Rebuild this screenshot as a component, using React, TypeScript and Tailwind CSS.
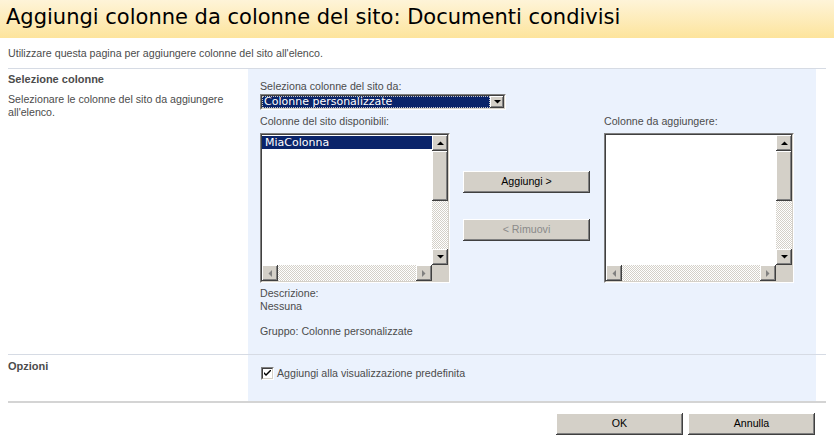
import React from 'react';

const raised =
  'bg-[#d4d0c8] shadow-[inset_-1px_-1px_#404040,inset_1px_1px_#ffffff,inset_-2px_-2px_#808080,inset_2px_2px_#d4d0c8]';
const hatch =
  'bg-[image:repeating-conic-gradient(#d4d0c8_0_25%,#ffffff_0_50%)] bg-[length:2px_2px]';
const sunkenOuter =
  'border-t border-l border-t-[#808080] border-l-[#808080] border-r border-b border-r-white border-b-white';
const sunkenInner =
  'border-t border-l border-t-[#404040] border-l-[#404040] border-r border-b border-r-[#d4d0c8] border-b-[#d4d0c8]';

function Arrow({ dir, disabled }: { dir: 'up' | 'down' | 'left' | 'right'; disabled?: boolean }) {
  const fill = disabled ? '#808080' : '#000000';
  const pts = {
    up: '0,4 7,4 3.5,0.5',
    down: '0,0 7,0 3.5,3.5',
    left: '4,0 4,7 0.5,3.5',
    right: '0,0 0,7 3.5,3.5',
  }[dir];
  const vertical = dir === 'up' || dir === 'down';
  return (
    <div className={`${raised} flex h-4 w-4 shrink-0 items-center justify-center`}>
      <svg width={vertical ? 7 : 4} height={vertical ? 4 : 7} viewBox={vertical ? '0 0 7 4' : '0 0 4 7'}>
        <polygon points={pts} fill={fill} />
      </svg>
    </div>
  );
}

function Listbox({ items, selected }: { items: string[]; selected?: number }) {
  return (
    <div className={`h-[150px] w-[190px] ${sunkenOuter}`}>
      <div className={`flex h-full w-full flex-col bg-white ${sunkenInner}`}>
        <div className="flex flex-1">
          <div className="flex-1 pt-[1px]">
            {items.map((it, i) => (
              <div
                key={it}
                className={`h-[13px] pl-[3px] font-['DejaVu_Sans'] text-[11px] leading-[13px] ${
                  i === selected ? 'bg-[#0a246a] text-white' : 'text-black'
                }`}
              >
                {it}
              </div>
            ))}
          </div>
          <div className="flex w-4 flex-col">
            <Arrow dir="up" />
            <div className={`${raised} h-[50px]`} />
            <div className={`flex-1 ${hatch}`} />
            <Arrow dir="down" />
          </div>
        </div>
        <div className="flex h-4">
          <Arrow dir="left" disabled />
          <div className={`flex-1 ${hatch}`} />
          <Arrow dir="right" disabled />
          <div className="w-4 bg-[#d4d0c8]" />
        </div>
      </div>
    </div>
  );
}

function WinButton({ label, disabled, className = '' }: { label: string; disabled?: boolean; className?: string }) {
  return (
    <div
      className={`${raised} flex h-[22px] w-[127px] items-center justify-center ${
        disabled ? 'text-[#8a8a8a]' : 'text-black'
      } ${className}`}
    >
      {label}
    </div>
  );
}

export default function App() {
  return (
    <div className="h-[441px] w-[834px] overflow-hidden bg-white font-['Liberation_Sans',Arial,sans-serif] text-[10.65px] text-[#4c4c4c]">
      <div className="h-[38px] bg-gradient-to-b from-[#fef4d8] to-[#fde49c] pl-[6px] pt-[2px] font-['DejaVu_Sans',Verdana,sans-serif] text-[21px] leading-[30px] text-black">
        Aggiungi colonne da colonne del sito: Documenti condivisi
      </div>

      <p className="px-[8px] pt-[9px] pb-[8px] leading-[13px]">
        Utilizzare questa pagina per aggiungere colonne del sito all'elenco.
      </p>

      <div className="mx-[8px] border-t border-[#d6dbe4]">
        <div className="flex h-[285px]">
          <div className="w-[240px] pt-[4px]">
            <div className="text-[11px] font-bold leading-[13px]">Selezione colonne</div>
            <div className="mt-[7px] pr-[10px] leading-[13px]">
              Selezionare le colonne del sito da aggiungere all'elenco.
            </div>
          </div>
          <div className="w-[568px] bg-[#ebf2fd] pl-[12px] pt-[11px]">
            <div className="leading-[13px]">Seleziona colonne del sito da:</div>
            <div className={`mt-[1px] h-[16px] w-[246px] ${sunkenOuter}`}>
              <div className={`flex h-full bg-white ${sunkenInner}`}>
                <div className="flex-1 border border-dotted border-[#c8c8c8] bg-[#0a246a] pl-[1px] font-['DejaVu_Sans'] text-[11px] leading-[10px] text-white">
                  Colonne personalizzate
                </div>
                <div className={`${raised} flex w-[14px] items-center justify-center`}>
                  <svg width="7" height="4" viewBox="0 0 7 4">
                    <polygon points="0,0 7,0 3.5,3.5" fill="#000" />
                  </svg>
                </div>
              </div>
            </div>

            <div className="flex">
              <div>
                <div className="mt-[5px] mb-[5px] leading-[13px]">Colonne del sito disponibili:</div>
                <Listbox items={['MiaColonna']} selected={0} />
              </div>
              <div className="ml-[13px] flex flex-col pt-[61px]">
                <WinButton label="Aggiungi >" />
                <WinButton label="< Rimuovi" disabled className="mt-[26px]" />
              </div>
              <div className="ml-[14px]">
                <div className="mt-[5px] mb-[5px] leading-[13px]">Colonne da aggiungere:</div>
                <Listbox items={[]} />
              </div>
            </div>

            <div className="mt-[4px] leading-[13px]">Descrizione:</div>
            <div className="leading-[13px]">Nessuna</div>
            <div className="mt-[12px] leading-[13px]">Gruppo: Colonne personalizzate</div>
          </div>
        </div>

        <div className="flex h-[47px] border-t border-[#d6dbe4]">
          <div className="w-[240px] pt-[5px] text-[11px] font-bold leading-[13px]">Opzioni</div>
          <div className="flex w-[568px] items-start gap-[3px] bg-[#ebf2fd] pl-[13px] pt-[12px]">
            <div className={`flex h-[13px] w-[13px] ${sunkenOuter}`}>
              <div className={`flex h-full w-full items-center justify-center bg-white ${sunkenInner}`}>
                <svg width="7" height="7" viewBox="0 0 7 7">
                  <path d="M0 2 L0 4 L2 6 L7 1 L7 -1 L2 4 Z" fill="#000" />
                </svg>
              </div>
            </div>
            <span className="leading-[13px]">Aggiungi alla visualizzazione predefinita</span>
          </div>
        </div>

        <div className="border-t-2 border-[#d4d4d4]" />
        <div className="flex justify-end gap-[5px] pt-[10px] pr-[11px]">
          <WinButton label="OK" />
          <WinButton label="Annulla" />
        </div>
      </div>
    </div>
  );
}
